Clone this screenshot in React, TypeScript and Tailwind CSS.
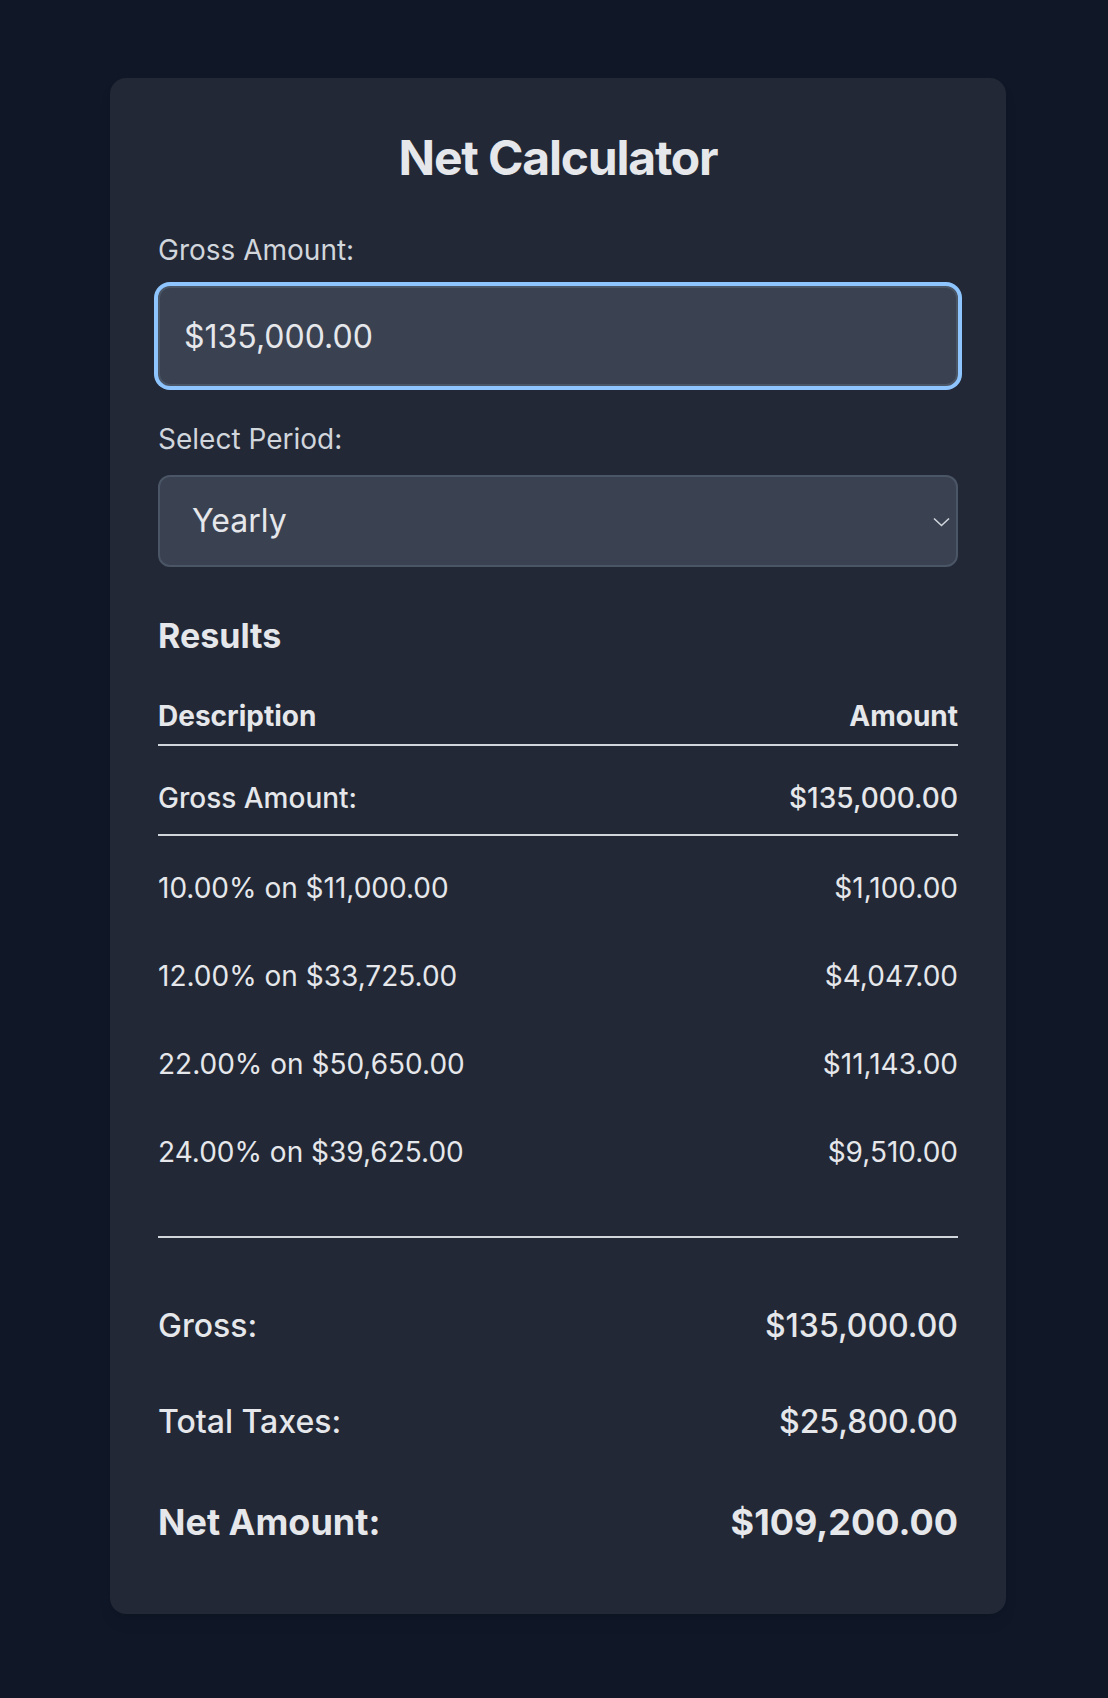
import React from 'react';

interface Bracket {
  rate: number;
  base: number;
  tax: number;
}

const brackets: Bracket[] = [
  { rate: 10, base: 11000, tax: 1100 },
  { rate: 12, base: 33725, tax: 4047 },
  { rate: 22, base: 50650, tax: 11143 },
  { rate: 24, base: 39625, tax: 9510 },
];

const money = (n: number) =>
  '$' + n.toLocaleString('en-US', { minimumFractionDigits: 2, maximumFractionDigits: 2 });

const App: React.FC = () => {
  const gross = 135000;
  const totalTax = brackets.reduce((sum, b) => sum + b.tax, 0);

  return (
    <div className="min-h-screen bg-gray-900 pt-[78px] pb-[85px] pl-2 font-['Inter','Noto_Sans',sans-serif] text-gray-200">
      <div className="mx-auto w-[896px] rounded-2xl bg-[#222835] p-12 shadow-lg">
        <h1 className="mb-10 text-center text-[48px] leading-[64px] font-bold tracking-tight">
          Net Calculator
        </h1>

        <label className="mb-4 block text-[28px] leading-[40px] text-gray-300">Gross Amount:</label>
        <input
          type="text"
          defaultValue="$135,000.00"
          className="mb-[33px] block h-[100px] w-full rounded-xl border-2 border-gray-600 bg-[#3a4151] px-6 text-[32px] text-gray-200 outline-none ring-4 ring-blue-300"
        />

        <label className="mb-4 block text-[28px] leading-[40px] text-gray-300">Select Period:</label>
        <div className="relative">
          <select
            defaultValue="yearly"
            className="block h-[92px] w-full appearance-none rounded-xl border-2 border-gray-600 bg-[#3a4151] pl-[32px] text-[32px] text-gray-200 outline-none"
          >
            <option value="yearly">Yearly</option>
            <option value="monthly">Monthly</option>
            <option value="biweekly">Bi-Weekly</option>
            <option value="weekly">Weekly</option>
          </select>
          <svg
            className="pointer-events-none absolute right-[8px] top-[42px] h-[10px] w-[17px] text-gray-300"
            viewBox="0 0 17 10"
            fill="none"
            stroke="currentColor"
            strokeWidth="1.6"
          >
            <path d="M1 1.5l7.5 7 7.5-7" />
          </svg>
        </div>

        <h2 className="mt-[45px] text-[34px] leading-[48px] font-bold">Results</h2>

        <table className="mt-[36px] w-full text-[28px] leading-[40px]">
          <thead>
            <tr className="border-b-2 border-gray-300">
              <th className="pb-2 text-left font-bold">Description</th>
              <th className="pb-2 text-right font-bold">Amount</th>
            </tr>
          </thead>
          <tbody>
            <tr className="border-b-2 border-gray-300">
              <td className="pt-8 pb-4 font-medium">Gross Amount:</td>
              <td className="pt-8 pb-4 text-right font-medium">{money(gross)}</td>
            </tr>
            {brackets.map((b, i) => (
              <tr key={i}>
                <td className="pt-8 pb-4">
                  {b.rate.toFixed(2)}% on {money(b.base)}
                </td>
                <td className="pt-8 pb-4 text-right">{money(b.tax)}</td>
              </tr>
            ))}
          </tbody>
        </table>

        <div className="mt-12 border-t-2 border-gray-300 pt-10">
          <div className="flex justify-between py-6 text-[32px] leading-[48px] font-medium">
            <span>Gross:</span>
            <span>{money(gross)}</span>
          </div>
          <div className="flex justify-between py-6 text-[32px] leading-[48px] font-medium">
            <span>Total Taxes:</span>
            <span>{money(totalTax)}</span>
          </div>
          <div className="flex justify-between pt-6 pb-4 text-[36px] leading-[56px] font-bold">
            <span>Net Amount:</span>
            <span>{money(gross - totalTax)}</span>
          </div>
        </div>
      </div>
    </div>
  );
};

export default App;
